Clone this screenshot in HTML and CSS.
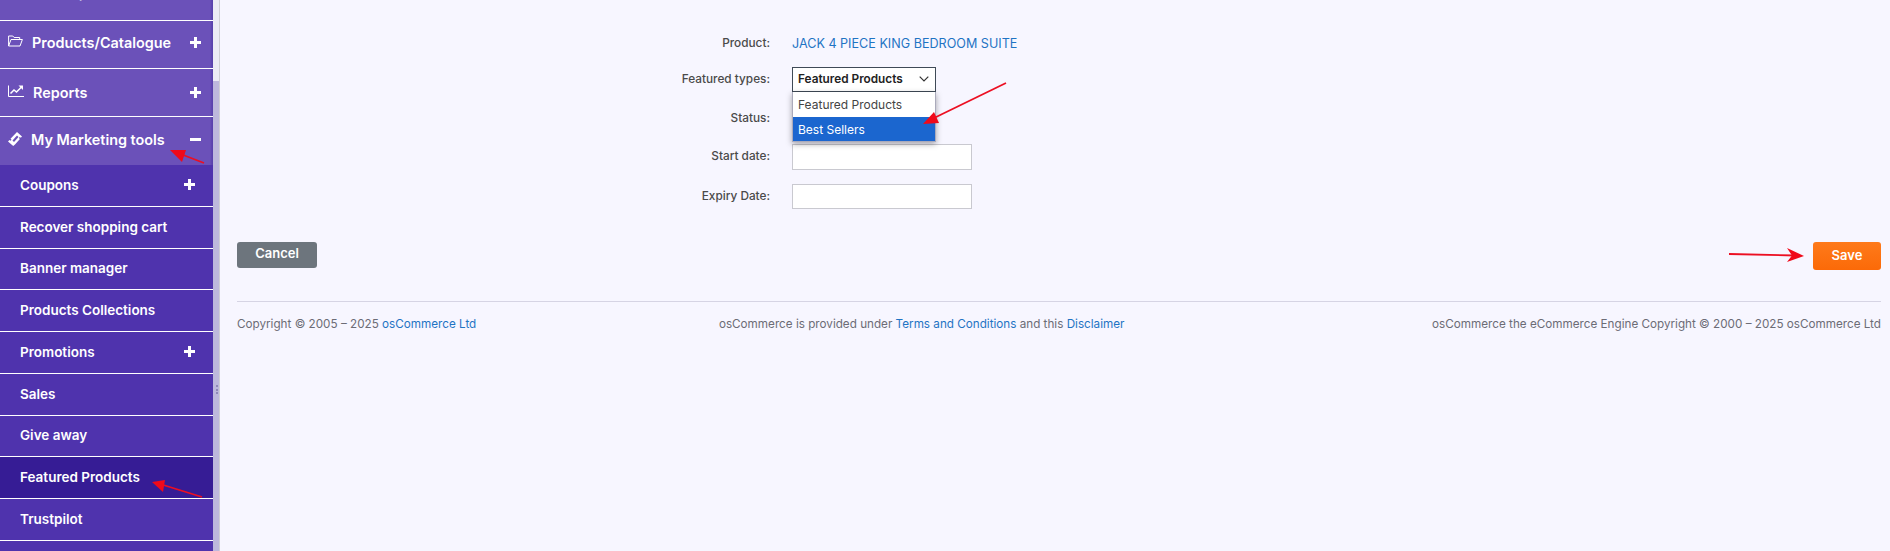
FILE: index.html
```html
<!DOCTYPE html>
<html lang="en">
<head>
  <meta charset="UTF-8">
  <title>Featured Products</title>
  <meta name="viewport" content="width=device-width, initial-scale=1.0">
  <link rel="stylesheet" href="styles.css">
</head>
<body>
  <div class="page">
    <aside class="sidebar">
      <ul class="menu">
        <li class="menu-item menu-cut">
          <svg class="menu-icon icon-top" viewBox="0 0 16 16"><path d="M2 7h12v7H2zM5 7V3h6v4"/></svg>
          <span class="menu-text">Orders/Customers</span>
          <span class="toggle"></span>
        </li>
        <li class="menu-item menu-products">
          <svg class="menu-icon icon-folder" viewBox="0 0 15 12"><path d="M.6 11V1h4.200l1.300 1.500h5.600v2M.6 11l2.400-6.500h11.400L12 11z"/></svg>
          <span class="menu-text">Products/Catalogue</span>
          <span class="toggle"></span>
        </li>
        <li class="menu-item menu-reports">
          <svg class="menu-icon icon-chart" viewBox="0 0 16 12"><path d="M.5 .5v11H16"/><path class="thick" d="M2.500 8.500l3.500-3.500 2.500 2L13.500 2"/><path class="solid" d="M10.500 .5H15v4.500z"/></svg>
          <span class="menu-text">Reports</span>
          <span class="toggle"></span>
        </li>
        <li class="menu-item menu-open">
          <svg class="menu-icon icon-ticket" viewBox="0 0 14 14"><path class="solid" d="M9 0l5 4.500-1.200 1.300-1-.8-.9 1 1 .9L7 12.500l-1.800 1.500L0 9.500l1.500-1.600 1 .9 1-1.100-1-.9z"/><path class="cut" d="M9 3.500L4.500 8.500 6 10l4.500-5z"/></svg>
          <span class="menu-text">My Marketing tools</span>
          <span class="toggle toggle-minus"></span>
        </li>
      </ul>
      <ul class="submenu">
        <li class="sub-item"><span>Coupons</span><span class="toggle"></span></li>
        <li class="sub-item"><span>Recover shopping cart</span></li>
        <li class="sub-item"><span>Banner manager</span></li>
        <li class="sub-item"><span>Products Collections</span></li>
        <li class="sub-item"><span>Promotions</span><span class="toggle"></span></li>
        <li class="sub-item"><span>Sales</span></li>
        <li class="sub-item"><span>Give away</span></li>
        <li class="sub-item active"><span>Featured Products</span></li>
        <li class="sub-item"><span>Trustpilot</span></li>
      </ul>
    </aside>
    <div class="side-rail">
      <div class="rail-thumb"><div class="rail-grip"></div></div>
    </div>

    <main class="content">
      <form class="form">
        <div class="form-row row-product">
          <label>Product:</label>
          <a class="product-link" href="#">JACK 4 PIECE KING BEDROOM SUITE</a>
        </div>
        <div class="form-row row-type">
          <label>Featured types:</label>
          <div class="select-wrap">
            <div class="select-box">
              <span>Featured Products</span>
              <svg class="chevron" viewBox="0 0 10 6"><path d="M.7 .7L5 5l4.300-4.300"/></svg>
            </div>
            <ul class="select-list">
              <li>Featured Products</li>
              <li class="selected">Best Sellers</li>
            </ul>
          </div>
        </div>
        <div class="form-row row-status">
          <label>Status:</label>
        </div>
        <div class="form-row row-start">
          <label>Start date:</label>
          <input class="text-input" type="text">
        </div>
        <div class="form-row row-expiry">
          <label>Expiry Date:</label>
          <input class="text-input" type="text">
        </div>
      </form>

      <div class="actions">
        <a class="btn btn-cancel" href="#">Cancel</a>
        <a class="btn btn-save" href="#">Save</a>
      </div>

      <footer class="footer">
        <div>Copyright &copy; 2005 &ndash; 2025 <a href="#">osCommerce Ltd</a></div>
        <div class="footer-mid">osCommerce is provided under <a href="#">Terms and Conditions</a> and this <a href="#">Disclaimer</a></div>
        <div>osCommerce the eCommerce Engine Copyright &copy; 2000 &ndash; 2025 osCommerce Ltd</div>
      </footer>
    </main>
  </div>

  <!-- red arrows drawn on top of the screenshot -->
  <svg class="arrows" viewBox="0 0 1890 551">
    <g class="arrow">
      <path d="M204 163L178 153"/><polygon points="170,150 186,150 182,162"/>
      <path d="M1006 83L932 119"/><polygon points="923,124 934,112 939,123"/>
      <path d="M1729 254L1795 255.500"/><polygon points="1804,256 1787,248 1792,255.500 1787,262"/>
      <path d="M202 497L160 484"/><polygon points="152,482 165,480 163,492"/>
    </g>
  </svg>
</body>
</html>
```

FILE: styles.css
```css
* { box-sizing: border-box; }
html, body { margin: 0; padding: 0; height: 100%; }
body { font-family: Inter, 'Noto Sans', Arial, sans-serif; font-size: 12px; background: #f7f6ff; color: #444; overflow: hidden; position: relative; }
ul { list-style: none; margin: 0; padding: 0; }
a { color: #1f74c4; text-decoration: none; }

.page { display: flex; height: 551px; }

.sidebar { width: 213px; flex: none; overflow: hidden; background: #4f33ad; color: #fff; font-weight: 600; }
.menu { margin-top: -27px; background: linear-gradient(to right, #6b51b9 210px, #5a42ad 212px); }
.menu-item { height: 48px; display: flex; align-items: center; padding: 0 12.500px 2px 8px; font-size: 14.400px; border-bottom: 1px solid #fff; }
.menu-cut { padding-bottom: 6px; }
.menu-products { padding-bottom: 4px; }
.menu-reports { padding-bottom: 1px; }
.menu-open { border-bottom: none; padding-bottom: 3px; }
.menu-icon { margin-right: 9px; flex: none; fill: none; stroke: #fff; stroke-width: 1; }
.icon-top { width: 15px; height: 15px; }
.icon-folder { width: 15px; height: 12px; margin-bottom: 3px; }
.icon-chart { width: 16px; height: 12px; margin-bottom: 2px; }
.icon-ticket { width: 14px; height: 14px; margin-bottom: 2px; }
.menu-icon .thick { stroke-width: 1.500; }
.menu-icon .solid { fill: #fff; stroke: none; }
.menu-icon .cut { fill: #6b51b9; stroke: none; }
.menu-text { flex: 1; }

/* plus / minus drawn from two bars */
.toggle { width: 11px; height: 11px; flex: none; background: linear-gradient(#fff, #fff) center / 11px 3px no-repeat, linear-gradient(#fff, #fff) center / 3px 11px no-repeat; }
.toggle-minus { background: linear-gradient(#fff, #fff) center / 11px 3px no-repeat; }

.sub-item { height: 41.750px; display: flex; align-items: center; justify-content: space-between; padding: 0 18px 1px 20px; font-size: 13.500px; border-bottom: 1px solid #fff; }
.sub-item.active { background: #361c95; }

.side-rail { width: 7px; flex: none; background: #ecebf5; border-right: 1px solid #cfcfd6; }
.rail-thumb { margin-top: 81px; height: 470px; background: #bdb8dc; padding-top: 304px; }
.rail-grip { width: 2px; height: 9px; margin-left: 3px; background: repeating-linear-gradient(#8f89b8 0 2px, transparent 2px 3.500px); }

.content { flex: 1; padding: 0 9px 0 17px; }

.form { height: 242px; position: relative; }
.form-row { display: flex; align-items: center; position: absolute; left: 0; }
.form-row label { width: 533px; margin-right: 22px; margin-bottom: 2px; text-align: right; font-size: 11.800px; font-weight: 500; color: #4a4a4a; }
.row-product { top: 33px; height: 20px; }
.row-product label { margin-bottom: 0; }
.row-type { top: 67px; height: 25px; }
.row-type label { margin-bottom: 1px; }
.row-status { top: 109px; height: 20px; }
.row-start { top: 144px; height: 26px; }
.row-expiry { top: 184px; height: 25px; }
.product-link { font-size: 12.600px; color: #1f74c4; }

.select-wrap { position: relative; width: 144px; }
.select-box { height: 25px; border: 1px solid #3f4a57; background: #fff; display: flex; align-items: center; justify-content: space-between; padding: 0 6px 1px 5px; font-size: 11.800px; font-weight: 600; color: #222; }
.chevron { width: 10px; height: 6px; fill: none; stroke: #333; stroke-width: 1.200; }
.select-list { position: absolute; top: 25px; left: 0; width: 100%; background: #fff; border: 1px solid #aab; border-top: none; box-shadow: 0 2px 6px rgba(0, 0, 0, .35); color: #444; z-index: 2; }
.select-list li { height: 24.500px; line-height: 25px; padding: 0 5px; }
.select-list .selected { background: #1b66cf; color: #fff; }
.text-input { width: 180px; height: 100%; border: 1px solid #c9c9d0; background: #fff; }

.actions { display: flex; justify-content: space-between; align-items: flex-start; height: 60px; border-bottom: 1px solid #d6d4e4; }
.btn { display: block; color: #fff; font-size: 13px; font-weight: 600; text-align: center; border-radius: 3px; }
.btn-cancel { width: 80px; height: 26px; line-height: 23px; background: #6d757d; }
.btn-save { width: 68px; height: 28px; line-height: 26px; background: linear-gradient(#fe7a1a, #fb6a08); }

.footer { display: flex; justify-content: space-between; padding-top: 15px; font-size: 11.700px; color: #6c6c76; }
.footer-mid { margin-right: 65px; }

.arrows { position: absolute; left: 0; top: 0; width: 1890px; height: 551px; z-index: 5; pointer-events: none; }
.arrow path { stroke: #ec0f22; stroke-width: 1.800; fill: none; }
.arrow polygon { fill: #f00a1a; }
```
